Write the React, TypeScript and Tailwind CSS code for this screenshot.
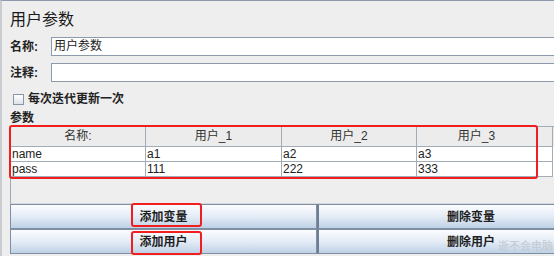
import React from "react";

const FONT = "font-['Liberation_Sans','Noto_Sans_CJK_SC',sans-serif]";

const cols = [
  { w: "w-[135px]", head: "名称:" },
  { w: "w-[136px]", head: "用户_1" },
  { w: "w-[135px]", head: "用户_2" },
  { w: "w-[120px]", head: "用户_3" },
  { w: "w-[16px]", head: "" },
];

const rows = [
  ["name", "a1", "a2", "a3", ""],
  ["pass", "111", "222", "333", ""],
];

export default function App() {
  return (
    <div
      className={`relative w-[554px] h-[256px] overflow-hidden bg-[#eeeeee] border-t border-l-2 border-t-[#8d9aab] border-l-[#c9ccd1] text-[#222] ${FONT}`}
    >
      <div className="pl-[8px]">
        {/* Title */}
        <div className="pt-[9px] h-[29px] text-[16px] leading-[20px] text-[#1a1a1a]">用户参数</div>

        {/* Name */}
        <div className="mt-[7px] flex items-center h-[19px]">
          <span className="w-[41px] text-[12px] font-bold">名称:</span>
          <div className="flex-1 h-[19px] border border-[#8d9aab] bg-white pl-[2px] text-[12px] leading-[17px] -mr-[4px]">
            用户参数
          </div>
        </div>

        {/* Comment */}
        <div className="mt-[7px] flex items-center h-[19px]">
          <span className="w-[41px] text-[12px] font-bold">注释:</span>
          <div className="flex-1 h-[19px] border border-[#8d9aab] bg-white -mr-[4px]" />
        </div>

        {/* Checkbox */}
        <div className="mt-[10px] flex items-center h-[15px] pl-[3px]">
          <div className="w-[11px] h-[11px] border border-[#8a96a5] bg-gradient-to-b from-white to-[#dde3ea]" />
          <span className="ml-[4px] text-[12px] font-bold leading-[15px]">每次迭代更新一次</span>
        </div>

        {/* Params label */}
        <div className="mt-[4px] h-[14px] text-[12px] leading-[14px] font-semibold">参数</div>

        {/* Table pane */}
        <div className="mt-[1px] h-[78px] border-l border-b border-[#9ea8b3] border-b-[#d6d8dc]">
          <div className="border-t border-[#a3adb8] w-[600px]">
            <div className="flex h-[20px] bg-[#ececec]">
              {cols.map((c, i) => (
                <div
                  key={i}
                  className={`${c.w} shrink-0 h-[20px] border-r border-b border-[#a3adb8] text-[12px] leading-[19px] text-center text-[#333]`}
                >
                  {c.head}
                </div>
              ))}
            </div>
            {rows.map((r, ri) => (
              <div key={ri} className="flex h-[15px] bg-white">
                {r.map((v, ci) => (
                  <div
                    key={ci}
                    className={`${cols[ci].w} shrink-0 h-[15px] border-r border-b border-[#a3adb8] text-[12px] leading-[14px] pl-[1px] text-[#222]`}
                  >
                    {v}
                  </div>
                ))}
              </div>
            ))}
          </div>
        </div>

        {/* Buttons */}
        <div className="grid grid-cols-[307px_307px] grid-rows-[25px_25px] w-[614px]">
          {["添加变量", "删除变量", "添加用户", "删除用户"].map((t, i) => (
            <div
              key={i}
              className={`flex items-center justify-center text-[12px] font-bold text-[#1e1e1e] bg-gradient-to-b from-[#fbfcfe] via-[#e4ecf6] to-[#bfd1e6] border border-[#7f8fa3] ${
                i % 2 === 1 ? "border-l-2 border-l-[#6f7f93]" : ""
              }`}
            >
              {t}
            </div>
          ))}
        </div>
      </div>

      {/* Watermark */}
      <div className="absolute left-[496px] top-[238px] text-[11px] leading-[14px] text-[#c3c8cf] whitespace-nowrap">
        逝不会电脑
      </div>

      {/* Annotation boxes */}
      <div className="absolute left-[7px] top-[124px] w-[529px] h-[54px] border-2 border-[#f01e1e] rounded-[3px]" />
      <div className="absolute left-[129px] top-[202px] w-[71px] h-[24px] border-2 border-[#f01e1e] rounded-[3px]" />
      <div className="absolute left-[129px] top-[230px] w-[71px] h-[24px] border-2 border-[#f01e1e] rounded-[3px]" />
    </div>
  );
}
